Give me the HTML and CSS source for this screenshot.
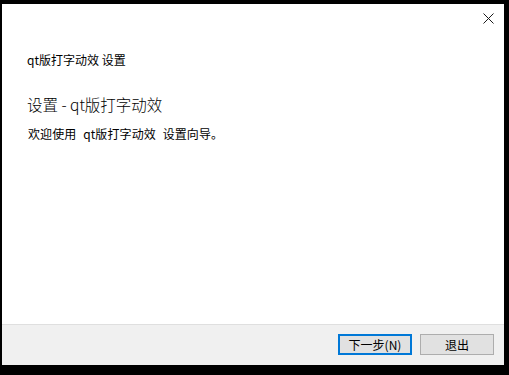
FILE: index.html
```html
<!DOCTYPE html>
<html lang="zh">
<head>
<meta charset="utf-8">
<link rel="stylesheet" href="styles.css">
</head>
<body>
<div class="window">
  <div class="main">
    <div class="topbar">
      <svg class="close" width="11" height="11" viewBox="0 0 11 11"><path d="M0.5 0.5 L10.5 10.5 M10.5 0.5 L0.5 10.5" stroke="#1a1a1a" stroke-width="1"/></svg>
    </div>
    <div class="caption">qt版打字动效 设置</div>
    <div class="heading">设置 - qt版打字动效</div>
    <div class="body">欢迎使用 qt版打字动效 设置向导。</div>
  </div>
  <div class="footer">
    <button class="btn primary">下一步(N)</button>
    <button class="btn">退出</button>
  </div>
</div>
</body>
</html>
```
FILE: styles.css
```css
html, body {
  margin: 0;
  padding: 0;
  background: #000;
  width: 509px;
  height: 375px;
  overflow: hidden;
  font-family: "Noto Sans CJK SC", "Microsoft YaHei", sans-serif;
}
.window {
  margin: 4px 0 0 2px;
  width: 502px;
  height: 361px;
  background: #fff;
  display: flex;
  flex-direction: column;
}
.main {
  flex: 1;
  padding: 0 0 0 25px;
}
.topbar {
  height: 30px;
  display: flex;
  justify-content: flex-end;
  align-items: flex-start;
}
.close {
  margin: 9px 10px 0 0;
}
.caption {
  font-size: 12px;
  color: #000;
  line-height: 16px;
  margin-top: 18px;
}
.heading {
  font-size: 15.5px;
  color: #000;
  line-height: 20px;
  margin-top: 26px;
  font-weight: 300;
}
.body {
  font-size: 12px;
  color: #000;
  line-height: 16px;
  margin-top: 12px;
  margin-left: 1px;
  word-spacing: 4px;
  letter-spacing: 0.1px;
}
.footer {
  border-top: 1px solid #dfdfdf;
  background: #f0f0f0;
  display: flex;
  justify-content: flex-end;
  align-items: flex-start;
  padding: 9px 10px 0 0;
  box-sizing: border-box;
  height: 41px;
  gap: 8px;
}
.btn {
  width: 74px;
  height: 21px;
  border: 1px solid #adadad;
  background: #e1e1e1;
  font-family: "Noto Sans CJK SC", sans-serif;
  font-size: 12px;
  color: #000;
  padding: 0;
  line-height: 17px;
  margin: 0;
}
.btn.primary {
  border: 2px solid #0078d7;
  line-height: 15px;
}
```
